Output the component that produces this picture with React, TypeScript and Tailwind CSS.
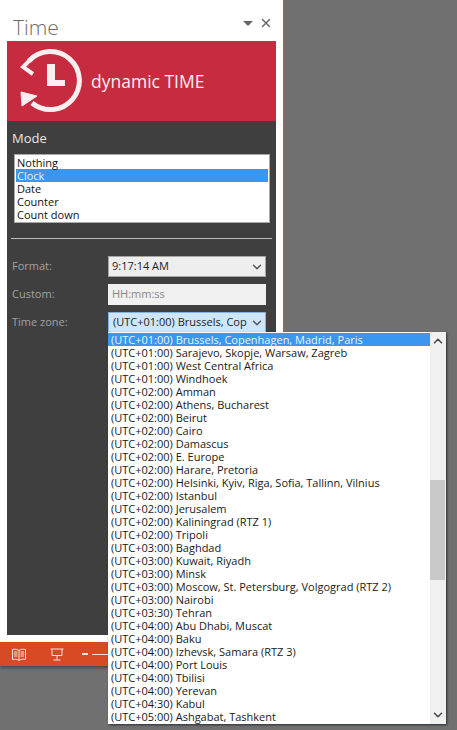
import { ChevronDown, ChevronUp, X } from "lucide-react";

const zones = [
  "(UTC+01:00) Brussels, Copenhagen, Madrid, Paris",
  "(UTC+01:00) Sarajevo, Skopje, Warsaw, Zagreb",
  "(UTC+01:00) West Central Africa",
  "(UTC+01:00) Windhoek",
  "(UTC+02:00) Amman",
  "(UTC+02:00) Athens, Bucharest",
  "(UTC+02:00) Beirut",
  "(UTC+02:00) Cairo",
  "(UTC+02:00) Damascus",
  "(UTC+02:00) E. Europe",
  "(UTC+02:00) Harare, Pretoria",
  "(UTC+02:00) Helsinki, Kyiv, Riga, Sofia, Tallinn, Vilnius",
  "(UTC+02:00) Istanbul",
  "(UTC+02:00) Jerusalem",
  "(UTC+02:00) Kaliningrad (RTZ 1)",
  "(UTC+02:00) Tripoli",
  "(UTC+03:00) Baghdad",
  "(UTC+03:00) Kuwait, Riyadh",
  "(UTC+03:00) Minsk",
  "(UTC+03:00) Moscow, St. Petersburg, Volgograd (RTZ 2)",
  "(UTC+03:00) Nairobi",
  "(UTC+03:30) Tehran",
  "(UTC+04:00) Abu Dhabi, Muscat",
  "(UTC+04:00) Baku",
  "(UTC+04:00) Izhevsk, Samara (RTZ 3)",
  "(UTC+04:00) Port Louis",
  "(UTC+04:00) Tbilisi",
  "(UTC+04:00) Yerevan",
  "(UTC+04:30) Kabul",
  "(UTC+05:00) Ashgabat, Tashkent",
];

const modes = ["Nothing", "Clock", "Date", "Counter", "Count down"];

const font = "font-['Open_Sans','Noto_Sans',sans-serif]";

// clock with a circular arrow, from the add-in's logo
const ClockLogo = () => (
  <svg width="62" height="64" viewBox="0 0 62 64" fill="none" stroke="#fbeef0">
    <path d="M9 12 A29 29 0 1 1 12 54" strokeWidth="5" />
    <path d="M10 11 L3 18 L13 25" strokeWidth="4" />
    <path d="M1 43 L17 47 L2 57 Z" fill="#fbeef0" strokeWidth="1" />
    <path d="M27 15 H35 V31 H45 V37 H27 Z" fill="#fbeef0" stroke="none" />
  </svg>
);

const BookIcon = () => (
  <svg width="14" height="13" viewBox="0 0 14 13" fill="none" stroke="#fbe3da" strokeWidth="1">
    <path d="M7 2.500 C5 1 3 1 0.500 1.500 V11.500 C3 11 5 11 7 12.500 C9 11 11 11 13.500 11.500 V1.500 C11 1 9 1 7 2.500 V12.500" />
    <path d="M2 4 H5.500 M2 6 H5.500 M2 8 H5.500 M8.500 4 H12 M8.500 6 H12 M8.500 8 H12" />
  </svg>
);

const SlideIcon = () => (
  <svg width="14" height="13" viewBox="0 0 14 13" fill="none" stroke="#fbe3da" strokeWidth="1">
    <path d="M0.500 1 H13.500 M2 1 V7.500 H12 V1 M7 7.500 V11.500 M3.500 12 H10.500" />
  </svg>
);

export default function App() {
  return (
    <div className={`relative w-[457px] h-[730px] overflow-hidden bg-[#707070] ${font}`}>
      <div className="w-[285px] border-r-2 border-[#8a6a5e]">
        <div className="bg-white h-[642px] px-[7px] flex flex-col">
          {/* Pane title */}
          <div className="h-[41px] flex items-end justify-between pl-[6px] pr-[3px]">
            <span className="text-[21px] leading-[28px] text-[#6e6a68] font-light">Time</span>
            <div className="flex items-center gap-[6px] mb-[11px] text-[#6a6a6a]">
              <span className="w-0 h-0 border-x-[5px] border-x-transparent border-t-[5px] border-t-[#666]" />
              <X size={14} strokeWidth={2.500} />
            </div>
          </div>

          <div className="w-[269px] h-[594px] bg-[#3f3f3f] flex flex-col">
            {/* Banner */}
            <div className="h-[80px] bg-[#c62b3f] flex items-center pl-[13px] gap-[9px]">
              <ClockLogo />
              <span className="text-[17.500px] text-[#fbeef0]">dynamic TIME</span>
            </div>

            <div className="px-[5px] pt-[9px] text-[13px] leading-[17px] text-[#e6e6e6]">Mode</div>

            {/* Mode list */}
            <div className="mx-[7px] mt-[7px] w-[256px] h-[69px] bg-white border border-[#a9a9a9] p-[1px]">
              {modes.map((m) => (
                <div
                  key={m}
                  className={
                    "h-[13px] pl-[1px] text-[11px] leading-[13px] " +
                    (m === "Clock" ? "bg-[#3a96ee] text-[#e8f4ff]" : "text-[#111]")
                  }
                >
                  {m}
                </div>
              ))}
            </div>

            <div className="mx-[4px] mt-[15px] h-px bg-[#bdbdbd]" />

            {/* Form rows */}
            <div className="mt-[17px] pl-[5px] flex flex-col gap-[7px] text-[11px]">
              <div className="flex items-center">
                <span className="w-[96px] text-[#a2a2a2]">Format:</span>
                <div className="w-[158px] h-[21px] bg-[#eeeeee] border border-[#a5a5a5] flex items-center justify-between pl-[3px] pr-px text-[#222]">
                  9:17:14 AM
                  <ChevronDown size={14} strokeWidth={2.500} className="text-[#555]" />
                </div>
              </div>
              <div className="flex items-center">
                <span className="w-[96px] text-[#a2a2a2]">Custom:</span>
                <div className="w-[158px] h-[21px] bg-[#f0f0f0] flex items-center pl-[4px] text-[#888]">HH:mm:ss</div>
              </div>
              <div className="flex items-center">
                <span className="w-[96px] text-[#a2a2a2]">Time zone:</span>
                <div className="w-[158px] h-[21px] bg-[#cfe6fa] border border-[#7fb4e4] flex items-center justify-between pl-[4px] pr-px text-[#222]">
                  (UTC+01:00) Brussels, Cop
                  <ChevronDown size={14} strokeWidth={2.500} className="text-[#555]" />
                </div>
              </div>
            </div>
          </div>
        </div>

        {/* Status bar */}
        <div className="h-[24px] bg-[#d84a26] flex items-center pl-[12px] shadow-[0_2px_3px_rgba(0,0,0,0.35)]">
          <BookIcon />
          <span className="ml-[24px]"><SlideIcon /></span>
          <span className="ml-[18px] w-[6px] h-[2px] bg-[#fbe3da]" />
          <span className="ml-[4px] w-[20px] h-px bg-[#fbe3da]" />
        </div>
      </div>

      {/* Open time zone dropdown */}
      <div className="absolute left-[108px] top-[332px] w-[338px] h-[392px] bg-white flex shadow-[1px_1px_2px_rgba(20,30,40,0.8)]">
        <div className="w-[322px] pt-px overflow-hidden">
          {zones.map((z, i) => (
            <div
              key={z}
              className={
                "h-[13px] pl-[3px] text-[11px] leading-[13px] whitespace-nowrap " +
                (i === 0 ? "bg-[#3a96ee] text-[#e8f4ff]" : "text-[#1a1a1a]")
              }
            >
              {z}
            </div>
          ))}
        </div>
        <div className="flex-1 bg-[#f0f0f0] flex flex-col items-center justify-between py-[2px]">
          <ChevronUp size={14} strokeWidth={2.500} className="text-[#444]" />
          <div className="absolute left-[322px] top-[148px] w-[15px] h-[100px] bg-[#c8c8c8]" />
          <ChevronDown size={14} strokeWidth={2.500} className="text-[#444]" />
        </div>
      </div>
    </div>
  );
}
